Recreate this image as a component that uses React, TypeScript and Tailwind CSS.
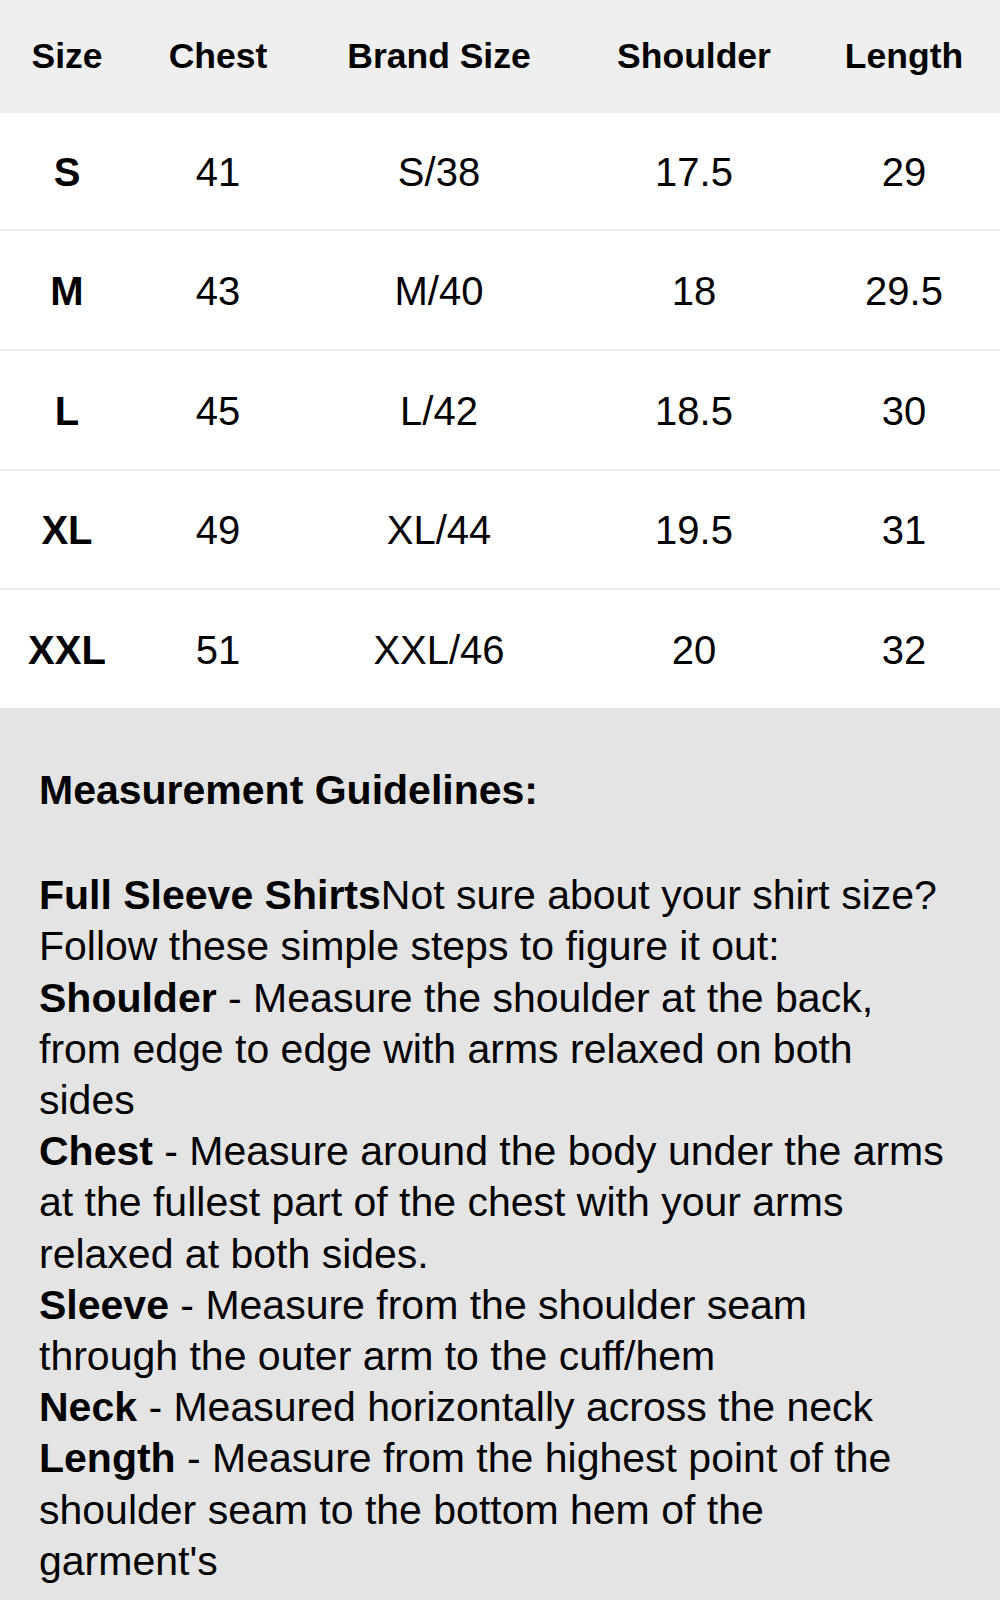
const columns = ["Size", "Chest", "Brand Size", "Shoulder", "Length"];

const rows = [
    ["S", "41", "S/38", "17.5", "29"],
    ["M", "43", "M/40", "18", "29.5"],
    ["L", "45", "L/42", "18.5", "30"],
    ["XL", "49", "XL/44", "19.5", "31"],
    ["XXL", "51", "XXL/46", "20", "32"],
];

const gridCols = "grid grid-cols-[134px_168px_274px_236px_184px]";

const App = () => {
    return (
        <div className="w-[1000px] min-h-[1600px] bg-[#e4e4e4] text-black font-['Liberation_Sans',Arial,sans-serif]">
            {/* size table */}
            <div className={`${gridCols} h-[113px] items-center bg-[#efefef] text-[35.5px] font-bold`}>
                {columns.map((c) => (
                    <div key={c} className="text-center">{c}</div>
                ))}
            </div>
            <div className="bg-white">
                {rows.map((r, i) => (
                    <div
                        key={r[0]}
                        className={`${gridCols} items-center pt-[2px] text-[40px] ${i === 0 ? "h-[116px]" : "h-[119.75px] border-t-2 border-[#ededed]"}`}
                    >
                        {r.map((cell, j) => (
                            <div key={j} className={`text-center ${j === 0 ? "font-bold" : ""}`}>{cell}</div>
                        ))}
                    </div>
                ))}
            </div>

            {/* guidelines */}
            <div className="pl-[39px] pr-[20px] pt-[57px] pb-[12px] text-[41px] leading-[51.2px]">
                <h2 className="font-bold mb-[54px]">Measurement Guidelines:</h2>
                <p><b>Full Sleeve Shirts</b>Not sure about your shirt size?<br />Follow these simple steps to figure it out:</p>
                <p><b>Shoulder</b> - Measure the shoulder at the back,<br />from edge to edge with arms relaxed on both<br />sides</p>
                <p><b>Chest</b> - Measure around the body under the arms<br />at the fullest part of the chest with your arms<br />relaxed at both sides.</p>
                <p><b>Sleeve</b> - Measure from the shoulder seam<br />through the outer arm to the cuff/hem</p>
                <p><b>Neck</b> - Measured horizontally across the neck</p>
                <p><b>Length</b> - Measure from the highest point of the<br />shoulder seam to the bottom hem of the<br />garment's</p>
            </div>
        </div>
    );
};

export default App;
